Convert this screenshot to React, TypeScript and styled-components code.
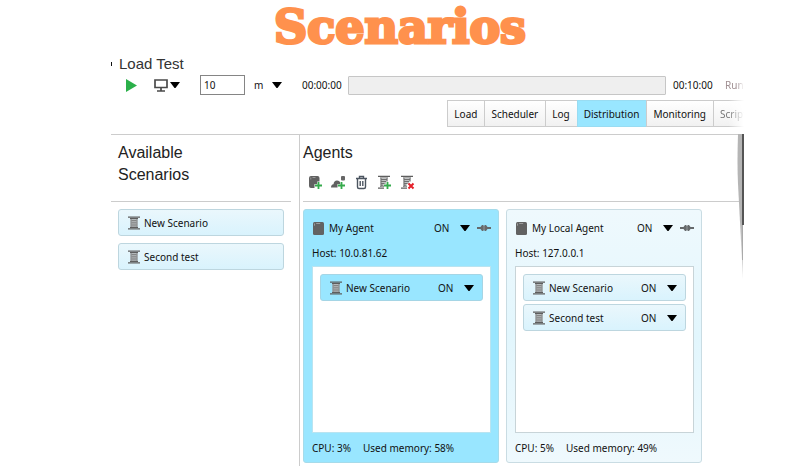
import React, { useState } from "react";
import styled, { createGlobalStyle, css } from "styled-components";

const GlobalStyle = createGlobalStyle`
  * { box-sizing: border-box; }
  body { margin: 0; background: #fff; color: #111; font: 10px/16px "Noto Sans", "Open Sans", sans-serif; }
  button, input, select { font: inherit; color: inherit; }
  h1, h2, h3, p, ul { margin: 0; padding: 0; }
  svg { display: block; flex: none; }
`;

const Page = styled.div`
  min-height: 100vh;
  display: flex;
  flex-direction: column;
`;

const Title = styled.h1`
  height: 56px;
  text-align: center;
  font: 900 46px/54px "DejaVu Serif", serif;
  color: #ff914d;
  -webkit-text-stroke: 3px #ff914d;
`;

const AppWindow = styled.main`
  position: relative;
  flex: 1;
  display: flex;
  flex-direction: column;
  margin: 0 56px 0 111px;
  overflow: hidden;
`;

const WindowTitle = styled.h2`
  display: flex;
  align-items: center;
  gap: 7px;
  font: 400 15px/16px "Liberation Sans", Arial, sans-serif;
  color: #333;
  &::before {
    content: "";
    width: 1px;
    height: 4px;
    background: #111;
  }
`;

const Toolbar = styled.div`
  display: flex;
  align-items: center;
  height: 26px;
  padding-left: 14px;
`;

const ToolButton = styled.button`
  display: flex;
  align-items: center;
  gap: 2px;
  padding: 0;
  border: 0;
  background: none;
`;

const DeviceButton = styled(ToolButton)`
  margin: 0 20px 0 17px;
`;

const DurationInput = styled.input`
  width: 45px;
  height: 20px;
  margin-right: 9px;
  padding: 0 3px;
  border: 1px solid #858585;
  background: #fff;
`;

const SelectBox = styled.span<{ $width: number }>`
  display: grid;
  align-items: center;
  width: ${(p) => p.$width}px;
  > * { grid-area: 1 / 1; }
  > svg { justify-self: end; pointer-events: none; }
`;

const PlainSelect = styled.select`
  width: 100%;
  padding: 0;
  border: 0;
  appearance: none;
  background: none;
`;

const Clock = styled.span<{ $start?: boolean }>`
  width: 40px;
  white-space: nowrap;
  margin-left: ${(p) => (p.$start ? 20 : 7)}px;
  margin-right: ${(p) => (p.$start ? 6 : 12)}px;
`;

const Progress = styled.div`
  flex: 1;
  height: 19px;
  border: 1px solid #c6c6c6;
  border-radius: 1px;
  background: #efefef;
`;

const RunStatus = styled.span`
  width: 19px;
  overflow: hidden;
  color: #a08f92;
  white-space: nowrap;
  mask-image: linear-gradient(to right, #000 60%, transparent);
`;

const Tabs = styled.div`
  display: flex;
  justify-content: flex-end;
  height: 27px;
  margin: 2px 0 7px;
`;

const Tab = styled.button<{ $active?: boolean; $cut?: boolean }>`
  padding: 0 7px 0 6px;
  white-space: nowrap;
  border: 1px solid #ccc;
  border-right-width: 0;
  background: ${(p) => (p.$active ? "#99e6ff" : "linear-gradient(#fff, #f1f1f1)")};
  ${(p) => p.$active && css`border-color: #99dcf2;`}
  ${(p) =>
    p.$cut &&
    css`
      flex: 0 0 31px;
      overflow: hidden;
      color: #777;
      mask-image: linear-gradient(to right, #000 50%, transparent);
    `}
`;

const Body = styled.div`
  flex: 1;
  display: grid;
  grid-template-columns: 189px minmax(0, 1fr);
  border-top: 1px solid #ccc;
`;

const Sidebar = styled.aside`
  border-right: 1px solid #ccc;
`;

const Heading = styled.h2`
  font: 400 16px/22px "Liberation Sans", Arial, sans-serif;
  color: #222;
`;

const SideHead = styled.div`
  height: 67px;
  margin-right: 8px;
  padding: 7px 60px 0 7px;
  border-bottom: 1px solid #ccc;
`;

const AgentsHead = styled.div`
  height: 67px;
  margin: 0 4px 0 3px;
  padding-top: 7px;
  border-bottom: 1px solid #ccc;
`;

const IconBar = styled.div`
  display: flex;
  align-items: center;
  gap: 8px;
  height: 16px;
  margin: 10px 0 0 5px;
`;

const SideList = styled.div`
  display: flex;
  flex-direction: column;
  gap: 7px;
  padding: 7px 15px 0 7px;
`;

const chip = css`
  display: flex;
  align-items: center;
  gap: 4px;
  height: 27px;
  padding: 0 8px 0 9px;
  border: 1px solid #bdd6df;
  border-radius: 3px;
  background: linear-gradient(#eaf7fc, #d9f3fd);
`;

const ScenarioButton = styled.button`
  ${chip}
`;

const ScenarioRow = styled.li<{ $active?: boolean }>`
  ${chip}
  ${(p) => p.$active && css`background: #99e6ff; border-color: #a5d5e5;`}
`;

const Grow = styled.span`
  flex: 1;
  white-space: nowrap;
`;

const Cards = styled.div`
  display: flex;
  gap: 7px;
  padding: 7px 4px 2px 3px;
`;

const Card = styled.article<{ $active?: boolean }>`
  flex: 0 1 196px;
  padding: 6px 7px 6px 8px;
  border: 1px solid ${(p) => (p.$active ? "#a6dbea" : "#c9dce3")};
  border-radius: 3px;
  background: ${(p) => (p.$active ? "#99e6ff" : "linear-gradient(#eff9fd, #e2f6fd 50%, #eff9fd)")};
`;

const CardHead = styled.header`
  display: flex;
  align-items: center;
  gap: 4px;
  height: 24px;
`;

const AgentName = styled.h3`
  flex: 1;
  white-space: nowrap;
  font: inherit;
`;

const Connection = styled.span`
  padding-left: 3px;
`;

const Host = styled.p`
  height: 26px;
  line-height: 26px;
`;

const ScenarioList = styled.ul<{ $active?: boolean }>`
  display: flex;
  flex-direction: column;
  gap: 3px;
  height: 167px;
  padding: 7px;
  list-style: none;
  border: 1px solid ${(p) => (p.$active ? "#b9e4f1" : "#c8d4d8")};
  background: #fff;
`;

const Stats = styled.footer`
  display: flex;
  gap: 12px;
  padding-top: 7px;
  white-space: nowrap;
`;

const EdgeShadow = styled.svg`
  position: absolute;
  top: 78px;
  right: 0;
`;

const Arrow = () => (
  <svg width="10" height="6" viewBox="0 0 10 6" aria-hidden="true">
    <path d="M0 0h10L5.500 6h-1z" fill="#000" />
  </svg>
);

const PlayIcon = () => (
  <svg width="12" height="13" viewBox="0 0 12 13" aria-hidden="true">
    <path d="M1 0l11 6.5L1 13z" fill="#2bb04a" />
  </svg>
);

const MonitorIcon = () => (
  <svg width="14" height="13" viewBox="0 0 14 13" aria-hidden="true">
    <path d="M1 1h12v7.500H1zM7 8.500v3M3 12h8" fill="none" stroke="#4a4a4a" strokeWidth="1.700" />
  </svg>
);

const ScenarioIcon = () => (
  <svg width="12" height="14" viewBox="0 0 12 14" aria-hidden="true">
    <path d="M0 .5h12v1.300H0zM2 2h8v1H2zM0 12.200h12v1.300H0zM2 11h8v1H2z" fill="#5e5e5e" />
    <path d="M2.500 3h7v8h-7z" fill="#b5babc" />
    <path d="M3 3v8M9 3v8M3.500 4.500h5M3.500 6.300h5M3.500 8.100h5M3.500 9.900h5" stroke="#777" strokeWidth=".8" fill="none" />
  </svg>
);

const ServerIcon = () => (
  <svg width="13" height="13" viewBox="0 0 13 13" aria-hidden="true">
    <rect x="1" width="11" height="13" rx="1.500" fill="#626262" />
    <path d="M2.500 1.500v2.200M4.200 1.500h4" stroke="#aaa" strokeWidth=".8" />
  </svg>
);

const PlugIcon = () => (
  <svg width="14" height="8" viewBox="0 0 14 8" aria-hidden="true">
    <path d="M0 3h3.500L5 1h1.500v6H5L3.500 5H0zM14 3h-3.500L9 1H7.500v6H9l1.500-2H14z" fill="#65696b" />
    <path d="M6 2h2v4H6z" fill="#7b8082" />
  </svg>
);

const Plus = () => <path d="M10.500 7v7M7 10.500h7" stroke="#35aa4c" strokeWidth="1.800" />;

const AddAgentIcon = () => (
  <svg width="15" height="15" viewBox="0 0 15 15" aria-hidden="true">
    <path d="M3 1h6.500q2 0 2 2v3.500H9.200V9H6.500v4H3q-2 0-2-2V3q0-2 2-2z" fill="#616161" />
    <path d="M2.800 2.500v2M4.500 2.500h3" stroke="#aaa" strokeWidth=".8" />
    <Plus />
  </svg>
);

const AddCloudIcon = () => (
  <svg width="15" height="15" viewBox="0 0 15 15" aria-hidden="true">
    <path d="M0 12.500q0-3 2.500-3.300Q3 5.500 6 5.500t3.200 2.500V9H6.500v3.500z" fill="#616161" />
    <rect x="10" y="1" width="4" height="4.500" rx="1" fill="#666" />
    <Plus />
  </svg>
);

const TrashIcon = () => (
  <svg width="15" height="15" viewBox="0 0 15 15" aria-hidden="true">
    <path d="M2 3.500h11M5.500 3V1.500h4V3M3.500 4v8q0 1.500 1.500 1.500h5q1.500 0 1.500-1.500V4M6.200 6v5M8.800 6v5" fill="none" stroke="#4c5560" strokeWidth="1.400" />
  </svg>
);

const SpoolActionIcon = ({ remove }: { remove?: boolean }) => (
  <svg width="15" height="15" viewBox="0 0 15 15" aria-hidden="true">
    <path d="M1 .8h12v1.300H1zM3 2.400h8v.8H3zM1 12.500h6v1.300H1zM3 11.200h4v.8H3z" fill="#5e5e5e" />
    <path d="M3.500 3h7v3.500H9V9H6.500v2.500h-3z" fill="#c0c2c3" />
    <path d="M4 3v8.500M10 3v3.500M4 4.500h6M4 6.500h5M4 8.500h3.500M4 10.200h2.500" stroke="#707070" fill="none" />
    {remove ? (
      <path d="M8.500 8.500l5 5M13.500 8.500l-5 5" stroke="#e5202a" strokeWidth="2" />
    ) : (
      <Plus />
    )}
  </svg>
);

function Dropdown({ label, width, options }: { label: string; width: number; options: string[] }) {
  return (
    <SelectBox $width={width}>
      <PlainSelect aria-label={label}>
        {options.map((o) => (
          <option key={o}>{o}</option>
        ))}
      </PlainSelect>
      <Arrow />
    </SelectBox>
  );
}

type Agent = { name: string; host: string; cpu: string; memory: string; scenarios: string[] };

const agents: Agent[] = [
  { name: "My Agent", host: "10.0.81.62", cpu: "3%", memory: "58%", scenarios: ["New Scenario"] },
  { name: "My Local Agent", host: "127.0.0.1", cpu: "5%", memory: "49%", scenarios: ["New Scenario", "Second test"] },
];

const tabs = ["Load", "Scheduler", "Log", "Distribution", "Monitoring", "Script"];

function AgentCard({ agent, active }: { agent: Agent; active: boolean }) {
  return (
    <Card $active={active}>
      <CardHead>
        <ServerIcon />
        <AgentName>{agent.name}</AgentName>
        <Dropdown label={`${agent.name} state`} width={36} options={["ON", "OFF"]} />
        <Connection><PlugIcon /></Connection>
      </CardHead>
      <Host>Host: {agent.host}</Host>
      <ScenarioList $active={active}>
        {agent.scenarios.map((s) => (
          <ScenarioRow key={s} $active={active}>
            <ScenarioIcon />
            <Grow>{s}</Grow>
            <Dropdown label={`${s} state`} width={36} options={["ON", "OFF"]} />
          </ScenarioRow>
        ))}
      </ScenarioList>
      <Stats>
        <span>CPU: {agent.cpu}</span>
        <span>Used memory: {agent.memory}</span>
      </Stats>
    </Card>
  );
}

export default function App() {
  const [tab, setTab] = useState("Distribution");
  return (
    <Page>
      <GlobalStyle />
      <Title>Scenarios</Title>
      <AppWindow>
        <WindowTitle>Load Test</WindowTitle>
        <Toolbar>
          <ToolButton aria-label="Run"><PlayIcon /></ToolButton>
          <DeviceButton aria-label="Run target"><MonitorIcon /><Arrow /></DeviceButton>
          <DurationInput aria-label="Duration" defaultValue="10" />
          <Dropdown label="Duration unit" width={28} options={["m", "h"]} />
          <Clock $start>00:00:00</Clock>
          <Progress role="progressbar" aria-label="Test progress" aria-valuenow={0} />
          <Clock>00:10:00</Clock>
          <RunStatus>Running</RunStatus>
        </Toolbar>
        <Tabs role="tablist">
          {tabs.map((t) => (
            <Tab key={t} role="tab" aria-selected={t === tab} $active={t === tab} $cut={t === "Script"} onClick={() => setTab(t)}>
              {t}
            </Tab>
          ))}
        </Tabs>
        <Body>
          <Sidebar>
            <SideHead><Heading>Available Scenarios</Heading></SideHead>
            <SideList>
              <ScenarioButton><ScenarioIcon />New Scenario</ScenarioButton>
              <ScenarioButton><ScenarioIcon />Second test</ScenarioButton>
            </SideList>
          </Sidebar>
          <section>
            <AgentsHead>
              <Heading>Agents</Heading>
              <IconBar>
                <ToolButton aria-label="Add agent"><AddAgentIcon /></ToolButton>
                <ToolButton aria-label="Add cloud agent"><AddCloudIcon /></ToolButton>
                <ToolButton aria-label="Delete agent"><TrashIcon /></ToolButton>
                <ToolButton aria-label="Add scenario"><SpoolActionIcon /></ToolButton>
                <ToolButton aria-label="Remove scenario"><SpoolActionIcon remove /></ToolButton>
              </IconBar>
            </AgentsHead>
            <Cards>
              {agents.map((a, i) => (
                <AgentCard key={a.name} agent={a} active={i === 0} />
              ))}
            </Cards>
          </section>
        </Body>
        <EdgeShadow width="7" height="145" viewBox="0 0 7 145" aria-hidden="true">
          <defs>
            <linearGradient id="edge" x1="0" y1="0" x2="0" y2="1">
              <stop offset="0.6" stopColor="#b5b5b5" />
              <stop offset="1" stopColor="#ddd" />
            </linearGradient>
          </defs>
          <path d="M1 0Q0 30 1 50L6 145V0z" fill="url(#edge)" />
          <path d="M5 0h2v91H5z" fill="#555" />
          <path d="M5 91h1v35H5z" fill="#aaa" />
        </EdgeShadow>
      </AppWindow>
    </Page>
  );
}
